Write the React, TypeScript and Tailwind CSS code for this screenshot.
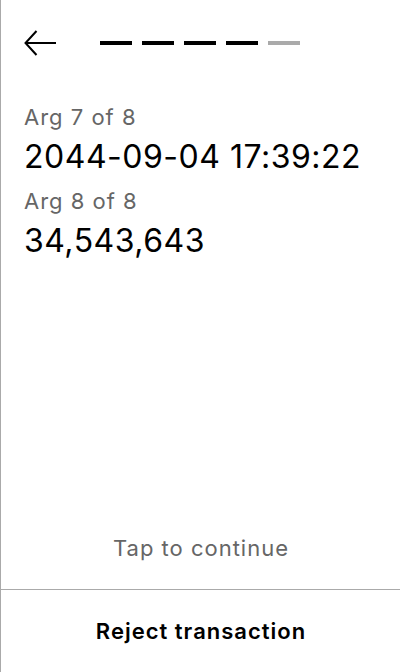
import React from 'react';

const steps = [true, true, true, true, false];

const args = [
  { label: 'Arg 7 of 8', value: '2044-09-04 17:39:22' },
  { label: 'Arg 8 of 8', value: '34,543,643' },
];

const App: React.FC = () => {
  return (
    <div
      className="flex h-[672px] w-[400px] flex-col border-l border-[#aaaaaa] bg-white text-black"
      style={{ fontFamily: 'Inter, "Noto Sans", sans-serif' }}
    >
      {/* Header: back arrow + progress dashes */}
      <div className="flex items-center pl-[23px] pt-[30px]">
        <svg width="32" height="26" viewBox="0 0 32 26" fill="none" stroke="black" strokeWidth="2">
          <path d="M12.5 1 L1.5 13 L12.5 25" />
          <path d="M1.5 13 H32" />
        </svg>
        <div className="ml-[44px] flex gap-[10px]">
          {steps.map((done, i) => (
            <div key={i} className={`h-1 w-8 ${done ? 'bg-black' : 'bg-[#aaaaaa]'}`} />
          ))}
        </div>
      </div>

      {/* Arguments */}
      <div className="mt-[47px] pl-[23px]">
        {args.map((arg, i) => (
          <div key={i} className={i > 0 ? 'mt-[11px]' : ''}>
            <p className="text-[22px] leading-[28px] tracking-[1px] text-[#666666]">{arg.label}</p>
            <p className="mt-[7px] text-[32px] leading-[38px] tracking-[0.5px]">{arg.value}</p>
          </div>
        ))}
      </div>

      <p className="mt-auto mb-[27px] pl-[1px] text-center text-[22px] leading-[28px] tracking-[1px] text-[#666666]">
        Tap to continue
      </p>

      <div className="flex h-[83px] items-center justify-center border-t border-[#aaaaaa] pl-[1px]">
        <span className="text-[22px] font-semibold leading-[28px] tracking-[1px]">Reject transaction</span>
      </div>
    </div>
  );
};

export default App;
